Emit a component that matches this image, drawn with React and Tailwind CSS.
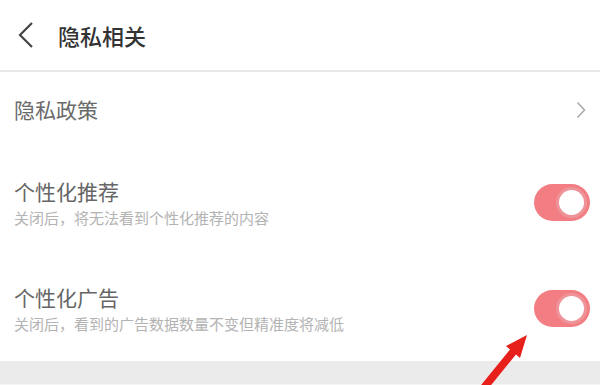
import React from 'react';

const font = { fontFamily: '"Noto Sans CJK SC", "Noto Sans", sans-serif' };

function Toggle() {
  return (
    <div className="w-[56px] h-[37px] rounded-full bg-[#f27d83] flex items-center justify-end pr-[3px]">
      <div className="w-[31px] h-[31px] rounded-full bg-white border-[3px] border-[#ee9499]"></div>
    </div>
  );
}

function SwitchRow({ title, desc, height }) {
  return (
    <div className={`flex items-center justify-between pl-[14px] pr-[10px] ${height}`}>
      <div className="flex flex-col">
        <span className="text-[21px] leading-[28px] text-[#666]">{title}</span>
        <span className="text-[15px] leading-[20px] mt-[3px] text-[#b3b3b3]">{desc}</span>
      </div>
      <Toggle />
    </div>
  );
}

export default function App() {
  return (
    <div className="relative w-[600px] h-[385px] overflow-hidden bg-white" style={font}>
      <div className="h-[72px] flex items-center border-b-2 border-[#e8e8e8]">
        <svg width="20" height="28" viewBox="0 0 20 28" className="ml-[16px]">
          <path d="M16 2 L4 14 L16 26" fill="none" stroke="#444" strokeWidth="2.2" />
        </svg>
        <span className="ml-[22px] text-[22px] font-medium text-[#333]">隐私相关</span>
      </div>

      <div className="h-[76px] flex items-center justify-between pl-[14px] pr-[14px]">
        <span className="text-[21px] text-[#6a6a6a]">隐私政策</span>
        <svg width="10" height="18" viewBox="0 0 10 18">
          <path d="M1.5 1.5 L8.5 9 L1.5 16.5" fill="none" stroke="#aaa" strokeWidth="1.6" />
        </svg>
      </div>

      <SwitchRow title="个性化推荐" desc="关闭后，将无法看到个性化推荐的内容" height="h-[108px]" />
      <SwitchRow title="个性化广告" desc="关闭后，看到的广告数据数量不变但精准度将减低" height="h-[105px]" />

      <div className="h-[24px] bg-[#ebebeb] border-b border-[#f5f5f5]"></div>

      <svg className="absolute left-0 top-0 pointer-events-none" width="600" height="385" viewBox="0 0 600 385">
        <polygon
          points="527,335 520,358 516,354.5 481,397.5 475,392.5 510,349.5 506,346"
          fill="#e8201b"
        />
      </svg>
    </div>
  );
}
